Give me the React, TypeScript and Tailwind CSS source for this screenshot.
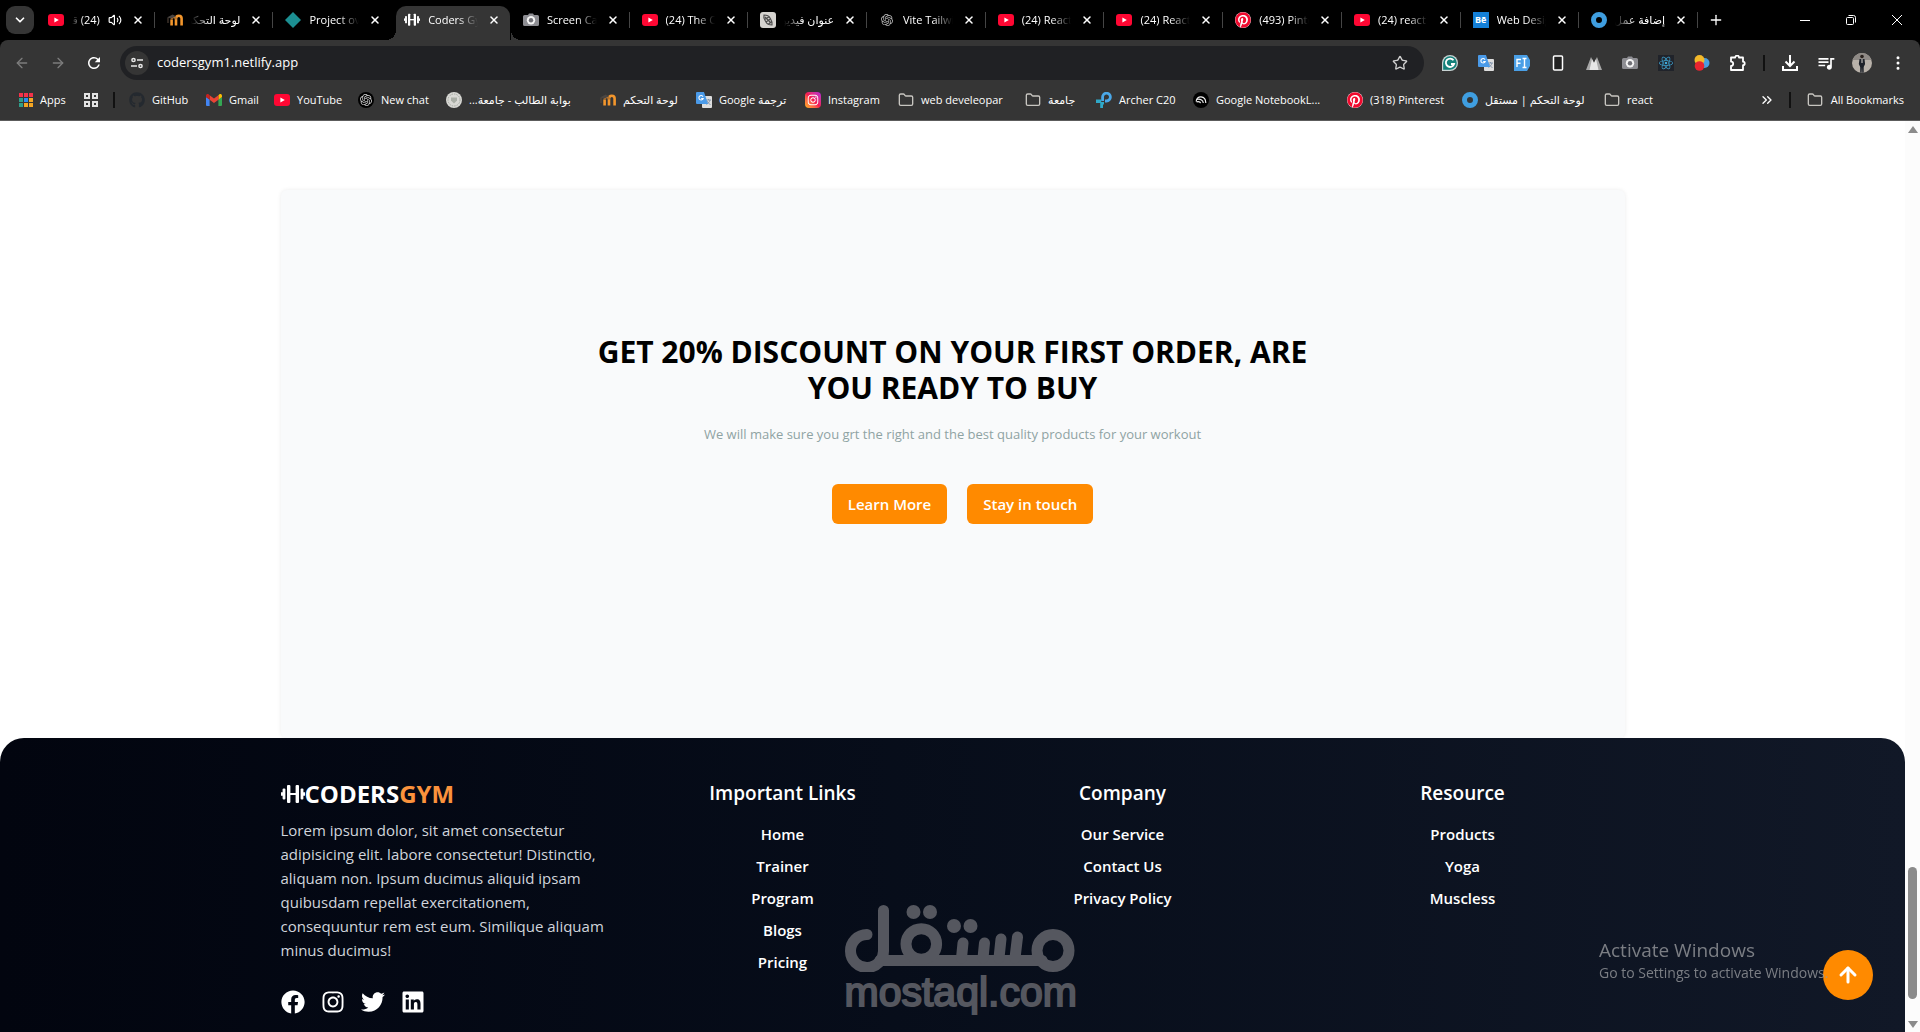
import type { ReactNode } from "react";
import {
  ArrowLeft,
  ArrowRight,
  ArrowUp,
  ChevronDown,
  ChevronsRight,
  Folder,
  MoreVertical,
  Plus,
  Star,
  Volume2,
  X,
} from "lucide-react";
import { FaFacebook, FaGithub, FaInstagram, FaLinkedin, FaPinterest, FaTwitter } from "react-icons/fa";
import { MdQueueMusic, MdRefresh } from "react-icons/md";
import { SiOpenai, SiReact } from "react-icons/si";

/* ---------- favicons ---------- */

const YouTubeIcon = () => (
  <svg viewBox="0 0 16 16" className="size-4 shrink-0" aria-hidden="true">
    <rect y="2" width="16" height="12" rx="3" fill="#ff0733" />
    <path d="M6.4 5.4v5.2L10.8 8z" fill="#fff" />
  </svg>
);

const MoodleIcon = () => (
  <svg viewBox="0 0 16 16" className="size-4 shrink-0" aria-hidden="true">
    <path d="M4.600 13.500V7.500M9 13.500V6.500a2.800 2.800 0 0 1 5.600 0v7" fill="none" stroke="#f3962c" strokeWidth="2.600" />
    <path d="M4.600 7.500a2.200 2.200 0 0 1 4.400 0" fill="none" stroke="#b8742c" strokeWidth="2" />
    <path d="M0 5.400 5.600 2.400 9 4.200 4.400 6.400z" fill="#4a4542" />
    <path d="M1 6v5" stroke="#5b4a3e" strokeWidth="1" />
  </svg>
);

const DiamondIcon = () => (
  <svg viewBox="0 0 16 16" className="size-4 shrink-0" aria-hidden="true">
    <path d="M8 0l8 8-8 8-8-8z" fill="#1c8f92" />
  </svg>
);

const BarbellIcon = ({ className }: { className: string }) => (
  <svg viewBox="0 0 24 20" className={className} aria-hidden="true">
    <g fill="currentColor">
      <rect x="0" y="8" width="2" height="4" rx="1" />
      <rect x="1.600" y="4.500" width="2.800" height="11" rx="1" />
      <rect x="6" y="1" width="3.400" height="18" rx="1" />
      <rect x="9" y="9" width="6" height="2" />
      <rect x="14.600" y="1" width="3.400" height="18" rx="1" />
      <rect x="19.600" y="4.500" width="2.800" height="11" rx="1" />
      <rect x="22" y="8" width="2" height="4" rx="1" />
    </g>
  </svg>
);

const CameraIcon = () => (
  <svg viewBox="0 0 16 16" className="size-4 shrink-0" aria-hidden="true">
    <path
      d="M5 3l1-1.600h4L11 3h3.400A1.600 1.600 0 0 1 16 4.600v7.800a1.600 1.600 0 0 1-1.600 1.600H1.600A1.600 1.600 0 0 1 0 12.400V4.600A1.600 1.600 0 0 1 1.600 3z"
      fill="#8e8e93"
    />
    <circle cx="8" cy="8.200" r="4.200" fill="#f3f3f3" />
    <circle cx="8" cy="8.200" r="2.200" fill="#707076" />
  </svg>
);

const FeatherIcon = () => (
  <svg viewBox="0 0 16 16" className="size-4 shrink-0" aria-hidden="true">
    <rect width="16" height="16" rx="3" fill="#d5d3cf" />
    <path
      d="M4 3c3 0 5 1 6 3s3 4 2 7c-3 0-5-1-6-3S3 6 4 3zM5 5l6 6M4.500 7.500l5-3M6 10l5-3.500M8.500 12l3.500-2.500"
      fill="none"
      stroke="#4d4d4d"
      strokeWidth="1.200"
    />
  </svg>
);

const PinterestIcon = () => (
  <span className="flex size-4 shrink-0 items-center justify-center rounded-full bg-white text-[#f00a2e]">
    <FaPinterest className="size-4" />
  </span>
);

const BehanceIcon = () => (
  <span className="flex size-4 shrink-0 items-center justify-center bg-[#1480d8] text-[9px] leading-4 font-bold text-white">
    Bē
  </span>
);

const RingIcon = () => <span className="size-4 shrink-0 rounded-full border-[5px] border-[#3f9ee0]" />;

const GptIcon = () => (
  <span className="flex w-4 shrink-0 justify-center">
    <SiOpenai className="size-3 text-[#b9b9b9]" />
  </span>
);

const TranslateIcon = () => (
  <svg viewBox="0 0 16 16" className="size-4 shrink-0" aria-hidden="true">
    <rect x="6" y="4" width="10" height="12" rx="1" fill="#dedede" />
    <path
      d="M10 8h5M12.500 7v1M14 8c-.5 2-2 3.500-3.500 4.500M11 9c.7 1.500 2 3 3.500 3.500"
      fill="none"
      stroke="#7a8fa8"
      strokeWidth=".9"
    />
    <path d="M1 0h7l4 12H1a1 1 0 0 1-1-1V1a1 1 0 0 1 1-1z" fill="#4a9ae8" />
    <path d="M7 4.600A2.200 2.200 0 1 0 7.200 6.500H5.200" fill="none" stroke="#fff" strokeWidth="1.100" />
  </svg>
);

const InstagramColor = () => (
  <span className="flex size-4 shrink-0 items-center justify-center rounded bg-linear-to-tr from-[#ffb000] via-[#f5164f] to-[#b51ad6]">
    <FaInstagram className="size-3 text-white" />
  </span>
);

const GmailIcon = () => (
  <svg viewBox="0 0 16 12" className="w-4 shrink-0" aria-hidden="true">
    <path d="M1 12h2.600V5.500L0 3v8a1 1 0 0 0 1 1z" fill="#4285f4" />
    <path d="M12.400 12H15a1 1 0 0 0 1-1V3l-3.600 2.500z" fill="#34a853" />
    <path d="M12.400 1.300v4.400L16 3V1.700C16 .2 14.300-.5 13.200.4z" fill="#fbbc04" />
    <path d="M3.600 5.700V1.300L8 4.600l4.400-3.300v4.400L8 9z" fill="#ea4335" />
    <path d="M0 1.700V3l3.600 2.700V1.300L2.800.4C1.700-.5 0 .2 0 1.700z" fill="#c5221f" />
  </svg>
);

const AppsIcon = () => (
  <svg viewBox="0 0 14 14" className="size-3.5 shrink-0" aria-hidden="true">
    <path d="M0 0h4v4H0zM5 0h4v4H5zM10 0h4v4h-4z" fill="#f4324a" />
    <path d="M0 5h4v4H0zM0 10h4v4H0z" fill="#2f9d8a" />
    <path d="M5 5h4v4H5z" fill="#2b8df0" />
    <path d="M10 5h4v4h-4zM5 10h4v4H5zM10 10h4v4h-4z" fill="#f5a623" />
  </svg>
);

const GridIcon = () => (
  <svg viewBox="0 0 14 14" className="size-3.5 shrink-0" aria-hidden="true">
    <path d="M1 1h4v4H1zM9 1h4v4H9zM1 9h4v4H1zM9 9h4v4H9z" fill="none" stroke="#e3e3e3" strokeWidth="2" />
  </svg>
);

const SealIcon = () => (
  <svg viewBox="0 0 16 16" className="size-4 shrink-0" aria-hidden="true">
    <circle cx="8" cy="8" r="8" fill="#d8d8d4" />
    <circle cx="8" cy="8" r="6" fill="none" stroke="#a3a7a0" strokeWidth="1" strokeDasharray="1.500 1" />
    <path d="M5 5.500h6v3L8 11.500 5 8.500z" fill="#a9aea6" />
  </svg>
);

const TpLinkIcon = () => (
  <svg viewBox="0 0 16 16" className="size-4 shrink-0" aria-hidden="true">
    <path d="M6.600 9V5.200A3.900 3.900 0 1 1 10.500 9H9" fill="none" stroke="#4aa8e8" strokeWidth="2.800" />
    <path d="M0 7.600h5.200V10H8v2.600H7V16H4.200v-5H0z" fill="#2fa9c9" />
  </svg>
);

const NotebookIcon = () => (
  <svg viewBox="0 0 16 16" className="size-4 shrink-0" aria-hidden="true">
    <circle cx="8" cy="8" r="8" fill="#000" />
    <path
      d="M3.200 9.500C3.200 3 12.800 3 12.800 11M3.600 7.500c3.500-1 6.400.5 6.700 3.500M3.600 9.800c2-.4 3.600 0 4 1.400"
      fill="none"
      stroke="#eee"
      strokeWidth="1.200"
    />
  </svg>
);

const ChatIcon = () => (
  <span className="flex size-4 shrink-0 items-center justify-center rounded-full bg-black">
    <SiOpenai className="size-3 text-[#d0d0d0]" />
  </span>
);

const FolderIcon = () => <Folder className="size-4 shrink-0 text-[#c7c5c0]" strokeWidth={2} />;

/* ---------- browser chrome ---------- */

type Tab = { icon: ReactNode; title: string; rtl?: boolean; active?: boolean; audio?: boolean };

const tabs: Tab[] = [
  { icon: <YouTubeIcon />, title: "(24) قائمة", rtl: true, audio: true },
  { icon: <MoodleIcon />, title: "لوحة التحكم", rtl: true },
  { icon: <DiamondIcon />, title: "Project overview" },
  { icon: <BarbellIcon className="w-4 shrink-0" />, title: "Coders Gym", active: true },
  { icon: <CameraIcon />, title: "Screen Capture" },
  { icon: <YouTubeIcon />, title: "(24) The Coder" },
  { icon: <FeatherIcon />, title: "عنوان فيديو", rtl: true },
  { icon: <GptIcon />, title: "Vite Tailwind" },
  { icon: <YouTubeIcon />, title: "(24) React" },
  { icon: <YouTubeIcon />, title: "(24) React" },
  { icon: <PinterestIcon />, title: "(493) Pinterest" },
  { icon: <YouTubeIcon />, title: "(24) react js" },
  { icon: <BehanceIcon />, title: "Web Design" },
  { icon: <RingIcon />, title: "إضافة عمل", rtl: true },
];

function BrowserTab({ tab, divider }: { tab: Tab; divider: boolean }) {
  return (
    <div
      className={
        tab.active
          ? "relative h-full min-w-0 flex-1 pt-1.5 pr-px pl-1 before:absolute before:bottom-0 before:-left-1.5 before:size-2.5 before:bg-[radial-gradient(circle_at_0_0,transparent_10px,#353535_10px)] after:absolute after:-right-2.5 after:bottom-0 after:size-2.5 after:bg-[radial-gradient(circle_at_100%_0,transparent_10px,#353535_10px)]"
          : "relative h-full min-w-0 flex-1 pt-1.5 pr-px pl-1"
      }
    >
      <div
        className={
          tab.active
            ? "flex h-full items-center gap-2 rounded-t-[10px] bg-[#353535] pr-2 pb-1.5 pl-2"
            : "flex h-full items-center gap-2 pr-2 pb-1.5 pl-2"
        }
      >
        {tab.icon}
        <span
          dir={tab.rtl ? "rtl" : "ltr"}
          className={
            tab.rtl
              ? "min-w-0 flex-1 overflow-hidden whitespace-nowrap [mask-image:linear-gradient(to_left,#000_60%,transparent)]"
              : "min-w-0 flex-1 overflow-hidden whitespace-nowrap [mask-image:linear-gradient(to_right,#000_60%,transparent)]"
          }
        >
          {tab.title}
        </span>
        {tab.audio && <Volume2 className="size-3.5 shrink-0" />}
        <button type="button" aria-label={`Close ${tab.title}`} className="flex w-4 shrink-0 justify-center">
          <X className="size-3" strokeWidth={3} />
        </button>
      </div>
      {divider && <span className="absolute top-3 right-0 h-4 w-px bg-[#454545]" />}
    </div>
  );
}

function TabStrip() {
  return (
    <div className="flex h-10 bg-black">
      <div className="flex w-9 shrink-0 items-center pl-1.5">
        <button
          type="button"
          aria-label="Search tabs"
          className="flex size-7 items-center justify-center rounded-[9px] bg-[#353535]"
        >
          <ChevronDown className="size-3.5" strokeWidth={3} />
        </button>
      </div>
      <div className="flex min-w-0 flex-1">
        {tabs.map((tab, i) => (
          <BrowserTab key={i} tab={tab} divider={!tab.active && !tabs[i + 1]?.active} />
        ))}
      </div>
      <button type="button" aria-label="New tab" className="flex w-9 shrink-0 items-center justify-center">
        <Plus className="size-4" strokeWidth={2} />
      </button>
      <div className="ml-12 flex shrink-0">
        <button type="button" aria-label="Minimize" className="flex w-[46px] items-center justify-center">
          <span className="h-px w-2.5 bg-white" />
        </button>
        <button type="button" aria-label="Restore" className="flex w-[46px] items-center justify-center">
          <svg viewBox="0 0 10 10" className="size-2.5" fill="none" stroke="#fff">
            <rect x=".5" y="2.500" width="7" height="7" rx="1" />
            <path d="M2.500.5h5a2 2 0 0 1 2 2v5" />
          </svg>
        </button>
        <button type="button" aria-label="Close window" className="flex w-[46px] items-center justify-center">
          <svg viewBox="0 0 10 10" className="size-2.5" stroke="#fff">
            <path d="M0 0l10 10M10 0L0 10" />
          </svg>
        </button>
      </div>
    </div>
  );
}

const extensions: { name: string; icon: ReactNode }[] = [
  {
    name: "Grammarly",
    icon: (
      <svg viewBox="0 0 16 16" className="size-4">
        <path d="M8 0a8 8 0 1 1 0 16H0V8a8 8 0 0 1 8-8z" fill="#c9d4d4" />
        <path d="M8 1.200a6.800 6.800 0 1 1 0 13.600H1.200V8A6.800 6.800 0 0 1 8 1.200z" fill="#14817a" />
        <path d="M11.500 5.300a4.200 4.200 0 1 0 .6 3.700H9" fill="none" stroke="#fff" strokeWidth="1.800" />
      </svg>
    ),
  },
  { name: "Google Translate", icon: <TranslateIcon /> },
  {
    name: "Fonts",
    icon: (
      <svg viewBox="0 0 16 16" className="size-4">
        <path d="M0 0h13l3 5v6l-3 5H0z" fill="#4a9fe6" />
        <path
          d="M3 12V4.500h4M3 8.200h3.500M8.500 3.500h4M8.500 12.500h4M10.500 3.500v9"
          fill="none"
          stroke="#fff"
          strokeWidth="1.400"
        />
      </svg>
    ),
  },
  {
    name: "Mobile view",
    icon: (
      <svg viewBox="0 0 16 16" className="size-4">
        <rect x="3.500" y="1" width="9" height="14" rx="1" fill="#222" stroke="#fff" strokeWidth="1.500" />
      </svg>
    ),
  },
  {
    name: "Peaks",
    icon: (
      <svg viewBox="0 0 16 16" className="size-4">
        <path d="M0 15L5 2l3 6 3-6 5 13z" fill="#a8a8a8" />
        <path d="M3.500 15L6 4l2 4 2-4 2.500 11z" fill="#e6e6e6" />
      </svg>
    ),
  },
  { name: "Screenshot", icon: <CameraIcon /> },
  {
    name: "React developer tools",
    icon: (
      <span className="flex size-4 items-center justify-center bg-[#20232a]">
        <SiReact className="size-3.5 text-[#3fa9d8]" />
      </span>
    ),
  },
  {
    name: "Colors",
    icon: (
      <svg viewBox="0 0 16 16" className="size-4">
        <circle cx="10.500" cy="8" r="5" fill="#4a9ee0" />
        <circle cx="5.500" cy="5" r="5" fill="#f4b92a" />
        <circle cx="5.500" cy="11" r="4.800" fill="#e9242f" />
      </svg>
    ),
  },
  {
    name: "Extensions",
    icon: (
      <svg viewBox="0 0 16 16" className="size-4" fill="none" stroke="#fff" strokeWidth="1.800" strokeLinejoin="round">
        <path d="M1 2.500h4.200a1.900 1.900 0 0 1 3.800 0h4v4.200a1.700 1.700 0 0 1 0 3.400V15H1v-4a2.200 2.200 0 0 0 0-4.400z" />
      </svg>
    ),
  },
];

function Toolbar() {
  return (
    <div className="flex h-10 items-end px-1">
      <div className="flex h-[34px] w-full items-center">
        <button type="button" aria-label="Back" className="flex w-9 shrink-0 justify-center text-[#7c7c7c]">
          <ArrowLeft className="size-4" />
        </button>
        <button type="button" aria-label="Forward" className="flex w-9 shrink-0 justify-center text-[#7c7c7c]">
          <ArrowRight className="size-4" />
        </button>
        <button type="button" aria-label="Reload" className="flex w-9 shrink-0 justify-center">
          <MdRefresh className="size-[18px]" />
        </button>
        <div className="mx-2 flex h-[34px] min-w-0 flex-1 items-center rounded-full bg-[#202124] pr-4 pl-[5px]">
          <button
            type="button"
            aria-label="Site information"
            className="flex size-6 shrink-0 items-center justify-center rounded-full bg-[#353535]"
          >
            <svg viewBox="0 0 12 12" className="size-3" fill="none" stroke="#e8e8e8" strokeWidth="1.500">
              <circle cx="2.500" cy="3" r="1.600" />
              <path d="M6 3h6M0 9h6" />
              <circle cx="9.500" cy="9" r="1.600" />
            </svg>
          </button>
          <input
            aria-label="Address"
            defaultValue="codersgym1.netlify.app"
            className="ml-2 min-w-0 flex-1 bg-transparent text-[13px] text-white outline-none"
          />
          <button type="button" aria-label="Bookmark this page">
            <Star className="size-4 text-[#d0d0d0]" />
          </button>
        </div>
        {extensions.map((ext) => (
          <button key={ext.name} type="button" aria-label={ext.name} className="flex w-9 shrink-0 justify-center">
            {ext.icon}
          </button>
        ))}
        <span className="mx-[7px] h-4 w-0.5 shrink-0 bg-[#111]" />
        <button type="button" aria-label="Downloads" className="flex w-9 shrink-0 justify-center">
          <svg viewBox="0 0 16 16" className="size-4" fill="none" stroke="#fff" strokeWidth="2">
            <path d="M8 0v10.500M3.500 6.500L8 11l4.500-4.500M1 11v4h14v-4" />
          </svg>
        </button>
        <button type="button" aria-label="Media controls" className="flex w-9 shrink-0 justify-center">
          <MdQueueMusic className="size-5" />
        </button>
        <button type="button" aria-label="Profile" className="flex w-9 shrink-0 justify-center">
          <svg viewBox="0 0 20 20" className="size-5 rounded-full">
            <rect width="20" height="20" fill="#b9b2aa" />
            <rect width="20" height="7" fill="#8f8a86" />
            <circle cx="10" cy="3.500" r="1.800" fill="#2a221e" />
            <path d="M7.500 6h5l.6 5-1.400 3v6h-1.400l-.3-6-.4 6H8.200v-6l-1.400-3z" fill="#1d2129" />
            <path d="M9.500 6h1v4h-1z" fill="#d7d2cb" />
          </svg>
        </button>
        <button type="button" aria-label="Menu" className="flex w-9 shrink-0 justify-center">
          <MoreVertical className="size-[18px]" strokeWidth={2} />
        </button>
      </div>
    </div>
  );
}

const bookmarks: { label: string; icon: ReactNode; width: string; rtl?: boolean }[] = [
  { label: "GitHub", icon: <FaGithub className="size-4 shrink-0 text-[#24292f]" />, width: "w-[77px]" },
  { label: "Gmail", icon: <GmailIcon />, width: "w-[68px]" },
  { label: "YouTube", icon: <YouTubeIcon />, width: "w-[84px]" },
  { label: "New chat", icon: <ChatIcon />, width: "w-[88px]" },
  { label: "بوابة الطالب - جامعة...", icon: <SealIcon />, width: "w-[154px]", rtl: true },
  { label: "لوحة التحكم", icon: <MoodleIcon />, width: "w-[96px]", rtl: true },
  { label: "ترجمة Google", icon: <TranslateIcon />, width: "w-[109px]", rtl: true },
  { label: "Instagram", icon: <InstagramColor />, width: "w-[93px]" },
  { label: "web develeopar", icon: <FolderIcon />, width: "w-[127px]" },
  { label: "جامعة", icon: <FolderIcon />, width: "w-[71px]", rtl: true },
  { label: "Archer C20", icon: <TpLinkIcon />, width: "w-[97px]" },
  { label: "Google NotebookL...", icon: <NotebookIcon />, width: "w-[154px]" },
  { label: "(318) Pinterest", icon: <PinterestIcon />, width: "w-[115px]" },
  { label: "لوحة التحكم | مستقل", icon: <RingIcon />, width: "w-[142px]", rtl: true },
  { label: "react", icon: <FolderIcon />, width: "w-[60px]" },
];

function BookmarksBar() {
  return (
    <nav
      aria-label="Bookmarks"
      className="flex h-[41px] items-center border-b border-[#5c5c5c] pr-4 pl-[19px] whitespace-nowrap"
    >
      <a href="#apps" className="flex w-[65px] shrink-0 items-center gap-[7px]">
        <AppsIcon />
        Apps
      </a>
      <a href="#groups" aria-label="Tab groups" className="w-[29px] shrink-0">
        <GridIcon />
      </a>
      <span className="mr-3.5 h-4 w-0.5 shrink-0 bg-[#111]" />
      {bookmarks.map((b) => (
        <a key={b.label} href="#bookmark" className={`flex shrink-0 items-center gap-[7px] ${b.width}`}>
          {b.icon}
          <span dir={b.rtl ? "rtl" : "ltr"}>{b.label}</span>
        </a>
      ))}
      <button type="button" aria-label="More bookmarks" className="mr-3.5 ml-auto">
        <ChevronsRight className="size-4" strokeWidth={2} />
      </button>
      <span className="mr-4 h-4 w-0.5 bg-[#111]" />
      <a href="#all-bookmarks" className="flex items-center gap-2">
        <FolderIcon />
        All Bookmarks
      </a>
    </nav>
  );
}

/* ---------- page ---------- */

function Discount() {
  return (
    <main className="flex flex-1 justify-center bg-white px-6 pt-[69px]">
      <section className="flex w-full max-w-[1344px] flex-col items-center rounded-md bg-gray-50 pt-36 pb-16 text-center shadow-[0_0_4px_rgba(0,0,0,0.08)]">
        <h2 className="max-w-3xl text-3xl leading-9 font-bold text-black uppercase">
          Get 20% discount on your first order, are you ready to buy
        </h2>
        <p className="mt-4 text-[13px] leading-6 text-[#8fa3a3]">
          We will make sure you grt the right and the best quality products for your workout
        </p>
        <div className="mt-[38px] ml-5 flex gap-5">
          <button type="button" className="h-10 rounded-md bg-[#ff8a00] px-4 text-[15px] font-semibold text-white">
            Learn More
          </button>
          <button type="button" className="h-10 rounded-md bg-[#ff8a00] px-4 text-[15px] font-semibold text-white">
            Stay in touch
          </button>
        </div>
      </section>
    </main>
  );
}

const linkGroups = [
  { title: "Important Links", links: ["Home", "Trainer", "Program", "Blogs", "Pricing"] },
  { title: "Company", links: ["Our Service", "Contact Us", "Privacy Policy"] },
  { title: "Resource", links: ["Products", "Yoga", "Muscless"] },
];

const socials = [
  { name: "Facebook", Icon: FaFacebook },
  { name: "Instagram", Icon: FaInstagram },
  { name: "Twitter", Icon: FaTwitter },
  { name: "LinkedIn", Icon: FaLinkedin },
];

function Footer() {
  return (
    <div className="bg-white">
      <footer className="rounded-t-3xl bg-linear-to-r from-[#02050f] to-[#111827] px-6 pt-10 pb-[18px] text-white">
        <div className="mx-auto grid max-w-[1344px] grid-cols-4 gap-4">
          <div>
            <div className="flex h-8 items-center text-2xl font-bold">
              <BarbellIcon className="h-5 w-6 shrink-0" />
              <span>
                CODERS<span className="text-[#fb923c]">GYM</span>
              </span>
            </div>
            <p className="mt-2 text-[15px] leading-6 text-gray-300">
              Lorem ipsum dolor, sit amet consectetur adipisicing elit. labore consectetur! Distinctio, aliquam non.
              Ipsum ducimus aliquid ipsam quibusdam repellat exercitationem, consequuntur rem est eum. Similique
              aliquam minus ducimus!
            </p>
            <div className="mt-7 flex gap-4">
              {socials.map(({ name, Icon }) => (
                <a key={name} href="#social" aria-label={name}>
                  <Icon className="size-6" />
                </a>
              ))}
            </div>
          </div>
          {linkGroups.map((group) => (
            <div key={group.title} className="pt-px text-center font-semibold">
              <h3 className="text-[19px] leading-7">{group.title}</h3>
              <ul className="mt-[15px] flex flex-col gap-2 text-[15px] leading-6">
                {group.links.map((link) => (
                  <li key={link}>
                    <a href="#page">{link}</a>
                  </li>
                ))}
              </ul>
            </div>
          ))}
        </div>
      </footer>
    </div>
  );
}

function MostaqlMark() {
  return (
    <div className="pointer-events-none absolute bottom-5 left-1/2 flex w-[230px] -translate-x-[108px] flex-col text-[#55575f]">
      <svg
        viewBox="0 0 230 67"
        className="h-[67px] w-full"
        fill="none"
        stroke="currentColor"
        strokeWidth="11"
        strokeLinecap="round"
      >
        <path d="M38.500 5.500V45.500A16.500 16.500 0 1 1 22 29.500" />
        <path d="M35 55.500H197" />
        <circle cx="208" cy="45.500" r="16" />
        <circle cx="76.300" cy="39" r="15.300" />
        <path d="M172.500 32L170 53M156 34L154 53M139.500 38L138 53M118 38L116.500 53" />
        <g fill="currentColor" stroke="none">
          <circle cx="68.500" cy="7" r="7" />
          <circle cx="85" cy="7" r="7" />
          <circle cx="109" cy="21" r="7" />
          <circle cx="125.500" cy="21" r="7" />
        </g>
      </svg>
      <span className="text-center font-['Liberation_Sans',sans-serif] text-[41px] leading-10 [-webkit-text-stroke:2px_currentColor]">
        mostaql.com
      </span>
    </div>
  );
}

function Scrollbar() {
  return (
    <div className="flex w-[15px] shrink-0 flex-col items-center bg-[#fcfcfc] pt-[5px] pb-1">
      <span className="h-0 w-0 border-x-[5px] border-b-[7px] border-x-transparent border-b-[#8b8b8b]" />
      <span className="mt-auto mb-[22px] h-[132px] w-[9px] rounded-full bg-[#8b8b8b]" />
      <span className="h-0 w-0 border-x-[5px] border-t-[7px] border-x-transparent border-t-[#8b8b8b]" />
    </div>
  );
}

export default function App() {
  return (
    <div className="flex min-h-screen flex-col bg-white font-['Open_Sans','Noto_Sans','DejaVu_Sans',sans-serif]">
      <header className="bg-black text-[11px] text-white">
        <TabStrip />
        <div className="rounded-t-lg bg-[#353535]">
          <Toolbar />
          <BookmarksBar />
        </div>
      </header>
      <div className="flex flex-1">
        <div className="relative flex min-w-0 flex-1 flex-col">
          <Discount />
          <Footer />
          <MostaqlMark />
          <button
            type="button"
            aria-label="Back to top"
            className="absolute right-8 bottom-8 flex size-[50px] items-center justify-center rounded-full bg-[#ff8a00] text-white"
          >
            <ArrowUp className="size-6" strokeWidth={3} />
          </button>
          <div className="pointer-events-none absolute right-[70px] bottom-[50px] w-[236px] whitespace-nowrap text-[#96989c] opacity-80">
            <p className="text-[19px] leading-7">Activate Windows</p>
            <p className="text-[14px] leading-[18px]">Go to Settings to activate Windows.</p>
          </div>
        </div>
        <Scrollbar />
      </div>
    </div>
  );
}
